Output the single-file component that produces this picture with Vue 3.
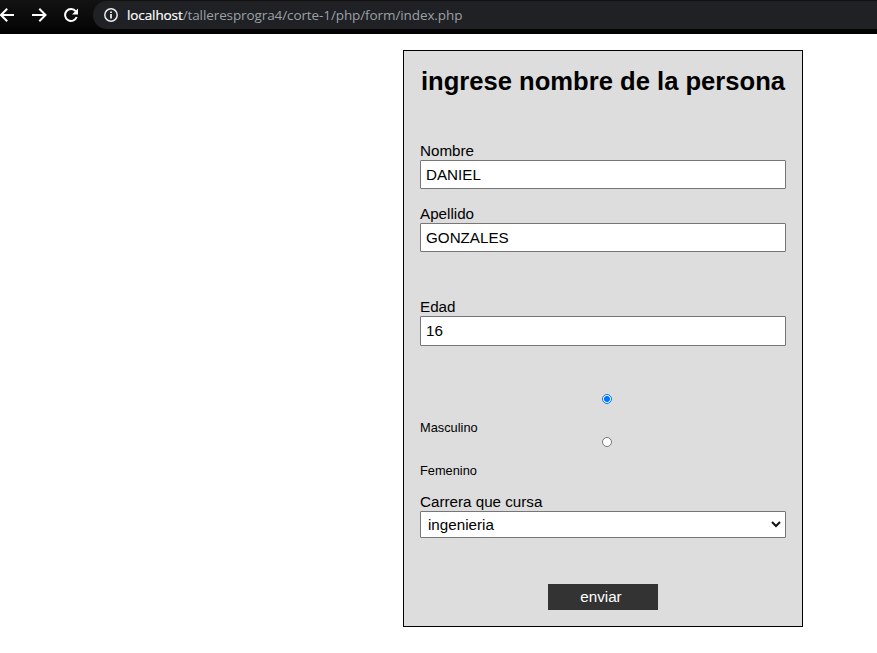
<script setup>
import { ref } from 'vue'

const nombre = ref('DANIEL')
const apellido = ref('GONZALES')
const edad = ref('16')
const genero = ref('m')
const carrera = ref('ingenieria')
</script>

<template>
  <div class="page">
    <header class="toolbar">
      <svg class="nav" width="93" height="30" viewBox="0 0 93 30" fill="none" stroke="#fff" stroke-width="2">
        <path d="M14 15H1M7.2 8.8L1 15l6.200 6.200" />
        <path d="M32 15h13M39.300 8.800L45.500 15l-6.200 6.200" />
        <path d="M75.800 11.300A6 6 0 1 0 76.700 17" />
        <path d="M78 8.500v6h-6z" fill="#fff" stroke="none" />
      </svg>
      <div class="address">
        <svg class="info" width="14" height="14" viewBox="0 0 14 14" fill="none" stroke="#e8eaed">
          <circle cx="7" cy="7" r="6.200" stroke-width="1.500" />
          <path d="M7 6v4.500M7 3.500v1.500" stroke-width="1.800" />
        </svg>
        <span class="host">localhost</span><span class="path">/talleresprogra4/corte-1/php/form/index.php</span>
      </div>
    </header>

    <form class="card" @submit.prevent>
      <h1>ingrese nombre de la persona</h1>
      <label class="field">
        <span class="caption">Nombre</span>
        <input v-model="nombre" class="text" type="text" />
      </label>
      <label class="field second">
        <span class="caption">Apellido</span>
        <input v-model="apellido" class="text" type="text" />
      </label>
      <label class="field age">
        <span class="caption">Edad</span>
        <input v-model="edad" class="text tall" type="text" />
      </label>
      <div class="options">
        <label class="option">
          <input v-model="genero" type="radio" name="genero" value="m" />
          <span>Masculino</span>
        </label>
        <label class="option">
          <input v-model="genero" type="radio" name="genero" value="f" />
          <span>Femenino</span>
        </label>
      </div>
      <label class="field career">
        <span class="caption">Carrera que cursa</span>
        <span class="select-box">
          <select v-model="carrera">
            <option>ingenieria</option>
          </select>
          <svg class="chevron" width="10" height="7" viewBox="0 0 10 7" fill="none" stroke="#111" stroke-width="2">
            <path d="M1 1l4 4 4-4" />
          </svg>
        </span>
      </label>
      <button class="send">enviar</button>
    </form>
  </div>
</template>

<style>
body {
  background: #fff;
}
</style>

<style scoped>
.page {
  height: 653px;
  overflow: hidden;
  font-family: "Liberation Sans", Arial, sans-serif;
  color: #000;
}
.toolbar {
  display: flex;
  height: 34px;
  background: linear-gradient(#121212, #080808 24px, #000);
}
.nav {
  flex: none;
}
.address {
  flex: 1;
  display: flex;
  align-items: center;
  box-sizing: border-box;
  height: 28px;
  margin-top: 1px;
  padding-left: 11px;
  border-radius: 14px 0 0 14px;
  background: #202124;
  font: 13.500px/28px "Open Sans", "Noto Sans", sans-serif;
  white-space: pre;
}
.info {
  margin-right: 9px;
}
.host {
  color: #fff;
  letter-spacing: -0.100px;
  -webkit-text-stroke: 0.200px #fff;
}
.path {
  color: #9aa0a6;
  letter-spacing: -0.100px;
}
.card {
  box-sizing: border-box;
  display: flex;
  flex-direction: column;
  width: 400px;
  height: 577px;
  margin: 16px 0 0 403px;
  padding: 0 16px;
  border: 1px solid #000;
  background: #ddd;
}
h1 {
  margin: 15px 0 46px;
  font-size: 25.600px;
  line-height: 30px;
  text-align: center;
  white-space: nowrap;
}
.field {
  display: flex;
  flex-direction: column;
}
.caption {
  height: 18px;
  font-size: 15.200px;
  line-height: 18px;
}
.second {
  margin-top: 16px;
}
.age {
  margin-top: 46px;
}
.text,
select {
  appearance: none;
  box-sizing: border-box;
  width: 100%;
  height: 29px;
  margin: 0;
  padding: 0 5px;
  border: 1px solid #767676;
  border-radius: 1px;
  background: #fff;
  color: #000;
  font: 15.200px "Liberation Sans", Arial, sans-serif;
  outline: none;
}
.tall {
  height: 30px;
  padding-bottom: 2px;
}
.options {
  margin-top: 48px;
}
.option {
  display: flex;
  flex-direction: column;
  height: 43px;
  font-size: 12.800px;
  line-height: 15px;
}
.option input {
  appearance: none;
  box-sizing: border-box;
  width: 10px;
  height: 10px;
  margin: 0 0 16px 182px;
  border: 1px solid #767676;
  border-radius: 50%;
  background: #fff;
}
.option input:checked {
  border-color: #0075ff;
  background: radial-gradient(circle, #0075ff 2.700px, #fff 3.300px);
}
.career {
  margin-top: 13px;
}
.select-box {
  display: flex;
  position: relative;
}
select {
  height: 27px;
  padding: 0 7px;
}
.chevron {
  position: absolute;
  top: 10px;
  right: 5px;
}
.send {
  align-self: center;
  width: 110px;
  height: 26px;
  margin-top: 46px;
  padding: 0 4px 2px 0;
  border: 0;
  background: #333;
  color: #fff;
  font: 15.200px "Liberation Sans", Arial, sans-serif;
}
</style>
